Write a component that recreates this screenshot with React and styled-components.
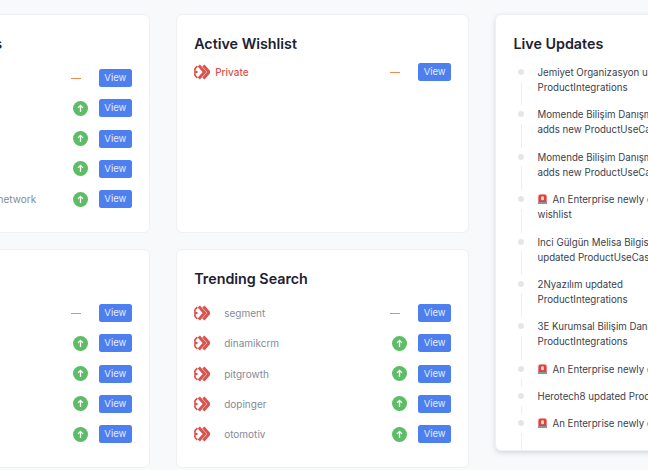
import React from "react";
import styled, { createGlobalStyle } from "styled-components";

const GlobalStyle = createGlobalStyle`
  html, body {
    margin: 0;
    padding: 0;
    background: #f8f9fb;
    overflow: hidden;
    height: 470px;
  }
  body {
    font-family: "Inter", "Liberation Sans", sans-serif;
  }
`;

const Page = styled.div`
  width: 648px;
  height: 470px;
  overflow: hidden;
`;

const Columns = styled.div`
  display: grid;
  grid-template-columns: 293.7px 293.7px 293.7px;
  column-gap: 25.6px;
  margin-left: -143.6px;
  padding-top: 14px;
  width: 932px;
`;

const Stack = styled.div`
  display: flex;
  flex-direction: column;
  gap: 16px;
`;

const Card = styled.section`
  box-sizing: border-box;
  height: ${({ $height }) => $height}px;
  padding: 19px 17px 0 17.5px;
  background: #fff;
  border: 1px solid #eef0f4;
  border-radius: 6px;
  box-shadow: ${({ $raised }) =>
    $raised ? "0 2px 5px rgba(40, 50, 70, 0.16)" : "none"};
  overflow: hidden;
`;

const Title = styled.h2`
  margin: 0 0 ${({ $tight }) => ($tight ? 9 : 15)}px;
  font-size: 14.3px;
  line-height: 20px;
  font-weight: 600;
  color: #1c2233;
  white-space: nowrap;
`;

const Rows = styled.div`
  display: flex;
  flex-direction: column;
  gap: 12.3px;
`;

const Row = styled.div`
  display: flex;
  align-items: center;
  height: 18px;
`;

const Name = styled.span`
  flex: 1;
  margin-left: ${({ $private }) => ($private ? "5px" : "14px")};
  font-size: 10px;
  font-weight: ${({ $private }) => ($private ? 500 : 400)};
  color: ${({ $private }) => ($private ? "#d9534f" : "#858a98")};
  white-space: nowrap;
`;

const Flat = styled.span`
  display: block;
  width: 9.5px;
  height: 1px;
  margin: 1px 18px 0 0;
  background: #f08a4f;
`;

const Up = styled.span`
  display: flex;
  align-items: center;
  justify-content: center;
  width: 15px;
  height: 15px;
  margin-right: 11px;
  border-radius: 50%;
  background: #5cbd66;
`;

const ViewButton = styled.button`
  width: 33.5px;
  height: 18px;
  padding: 0;
  border: 0;
  border-radius: 2.5px;
  background: #4d7fee;
  color: #e4ebfd;
  font-family: inherit;
  font-size: 9.5px;
  line-height: 18px;
`;

const Timeline = styled.div`
  display: flex;
  flex-direction: column;
  margin-top: -4px;
`;

const Update = styled.div`
  position: relative;
  height: ${({ $single }) => ($single ? 27.3 : 42.4)}px;
  padding-left: 24px;
  font-size: 9.7px;
  line-height: 15px;
  color: #3a3f4e;
  white-space: nowrap;
`;

const Dot = styled.span`
  position: absolute;
  left: 5px;
  top: 4px;
  width: 6px;
  height: 6px;
  border-radius: 50%;
  background: #e4e6ea;
`;

const Rail = styled.span`
  position: absolute;
  left: 7.5px;
  top: 16.5px;
  bottom: ${({ $last }) => ($last ? "-30px" : "2px")};
  width: 1px;
  background: #eceef1;
`;

const Beacon = styled.svg`
  width: 11px;
  height: 12px;
  margin-right: 4px;
  vertical-align: -2px;
`;

const Mark = styled.svg`
  flex: none;
  width: 16px;
  height: 16px;
`;

const Arrows = () => (
  <Mark viewBox="0 0 16 16">
    <g fill="none" stroke="#d9534f" strokeWidth="3">
      <path d="M4.8 1.6 10.6 8l-5.8 6.4" />
      <path d="M9.4 1.6 15 8l-5.6 6.4" />
      <path strokeWidth="1.8" d="M3.4 2.2C1.6 3.4.8 4.8.7 6M3.4 13.8C1.6 12.6.8 11.2.7 10" />
    </g>
    <path fill="#d9534f" d="M.2 5.6 4.4 8 .2 10.4z" />
  </Mark>
);

const UpArrow = () => (
  <svg width="9" height="9" viewBox="0 0 9 9" fill="none" stroke="#fff" strokeWidth="1.3">
    <path d="M4.5 8V1.5M2 3.9l2.5-2.5L7 3.9" />
  </svg>
);

const Siren = () => (
  <Beacon viewBox="0 0 11 12">
    <rect x="0.5" y="0.5" width="10" height="11" rx="1.5" fill="#f0f1f3" />
    <path fill="#e0413c" d="M1.4 9V3.6a2 2 0 0 1 2-2h4.2a2 2 0 0 1 2 2V9z" />
    <rect x="4" y="3.2" width="3" height="4" rx="1.3" fill="#f9d3cf" />
    <rect x="1" y="9" width="9" height="2" fill="#8a929e" />
  </Beacon>
);

const topItems = [
  { name: "", flat: true },
  { name: "" },
  { name: "" },
  { name: "" },
  { name: "enterprise wireless network" },
];
const tagItems = [
  { name: "", flat: true },
  { name: "" },
  { name: "" },
  { name: "" },
  { name: "" },
];
const searchItems = [
  { name: "segment", flat: true },
  { name: "dinamikcrm" },
  { name: "pitgrowth" },
  { name: "dopinger" },
  { name: "otomotiv" },
];
const updates = [
  { lines: ["Jemiyet Organizasyon updated", "ProductIntegrations"] },
  { lines: ["Momende Bilişim Danışmanlık", "adds new ProductUseCase"] },
  { lines: ["Momende Bilişim Danışmanlık", "adds new ProductUseCase"] },
  { lines: ["An Enterprise newly created a", "wishlist"], siren: true },
  { lines: ["Inci Gülgün Melisa Bilgisayar", "updated ProductUseCase"] },
  { lines: ["2Nyazılım updated", "ProductIntegrations"] },
  { lines: ["3E Kurumsal Bilişim Danışmanlık", "ProductIntegrations"] },
  { lines: ["An Enterprise newly created a wishlist"], siren: true },
  { lines: ["Herotech8 updated ProductUseCase"] },
  { lines: ["An Enterprise newly created a wishlist"], siren: true },
];

const ItemRow = ({ name, flat, $private }) => (
  <Row>
    <Arrows />
    <Name $private={$private}>{name}</Name>
    {flat ? <Flat /> : <Up><UpArrow /></Up>}
    <ViewButton>View</ViewButton>
  </Row>
);

const App = () => (
  <Page>
    <GlobalStyle />
    <Columns>
      <Stack>
        <Card $height={219}>
          <Title>Trending Products</Title>
          <Rows>
            {topItems.map((item, i) => <ItemRow key={i} {...item} />)}
          </Rows>
        </Card>
        <Card $height={219}>
          <Title>Popular Tags</Title>
          <Rows>
            {tagItems.map((item, i) => <ItemRow key={i} {...item} />)}
          </Rows>
        </Card>
      </Stack>
      <Stack>
        <Card $height={219}>
          <Title $tight>Active Wishlist</Title>
          <Rows>
            <ItemRow name="Private" flat $private />
          </Rows>
        </Card>
        <Card $height={219}>
          <Title>Trending Search</Title>
          <Rows>
            {searchItems.map((item) => <ItemRow key={item.name} {...item} />)}
          </Rows>
        </Card>
      </Stack>
      <Card $height={437} $raised>
        <Title>Live Updates</Title>
        <Timeline>
          {updates.map((u, i) => (
            <Update key={i} $single={u.lines.length === 1}>
              <Dot />
              <Rail $last={i === updates.length - 1} />
              {u.siren && <Siren />}
              {u.lines[0]}
              {u.lines[1] && <br />}
              {u.lines[1]}
            </Update>
          ))}
        </Timeline>
      </Card>
    </Columns>
  </Page>
);

export default App;
